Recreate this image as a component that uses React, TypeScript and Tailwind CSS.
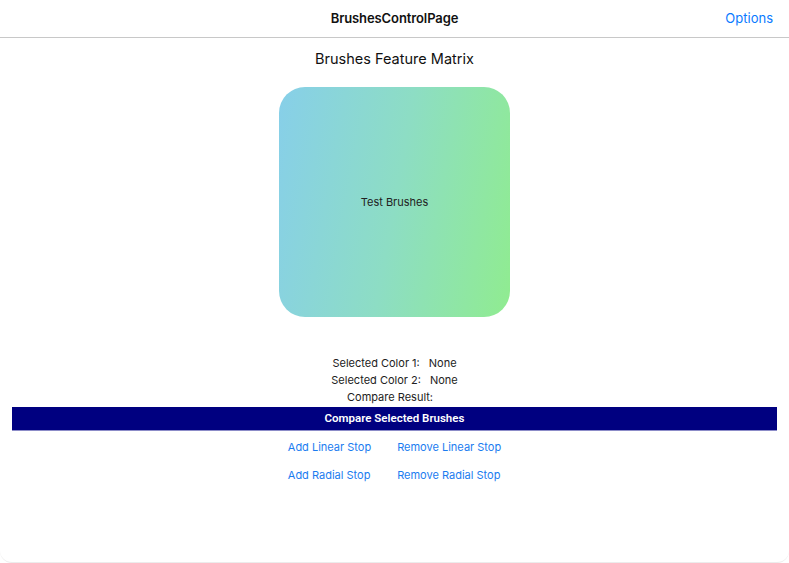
import React from "react";

export default function App() {
  const font = { fontFamily: "Inter, 'Noto Sans', sans-serif" };
  return (
    <div className="w-[789px] h-[563px] bg-white overflow-hidden flex flex-col rounded-b-[12px] border-b border-[#ececec]" style={font}>
      <div className="h-[38px] shrink-0 border-b border-[#c8c8c8] flex items-center relative">
        <div className="flex-1 text-center text-[13px] font-semibold text-[#111] tracking-[-0.1px]">BrushesControlPage</div>
        <div className="absolute right-[16px] top-[9px] text-[13px] text-[#0a7aff]">Options</div>
      </div>
      <div className="flex flex-col items-center">
        <div className="mt-[11px] text-[14.5px] text-[#111] leading-[20px]">Brushes Feature Matrix</div>
        <div className="mt-[18px] w-[231px] h-[230px] rounded-[26px] flex items-center justify-center" style={{ backgroundImage: "linear-gradient(100deg, #87cfe9 0%, #8dddc4 50%, #90ec90 100%)" }}>
          <span className="text-[11px] text-[#222]">Test Brushes</span>
        </div>
        <div className="mt-[38px] flex flex-col items-center text-[11px] text-[#222] leading-[17px]">
          <div className="flex gap-[9px]"><span>Selected Color 1:</span><span>None</span></div>
          <div className="flex gap-[9px]"><span>Selected Color 2:</span><span>None</span></div>
          <div className="flex gap-[9px]"><span>Compare Result:</span><span></span></div>
        </div>
      </div>
      <div className="mx-[12px] mt-[1px] h-[24px] bg-[#000080] border-b border-[#8c8cc8] flex items-center justify-center text-white text-[11.5px] font-semibold" style={{ fontFamily: "Roboto, 'Noto Sans', sans-serif" }}>
        Compare Selected Brushes
      </div>
      <div className="mt-[8px] flex justify-center">
        <div className="grid grid-cols-[auto_auto] gap-x-[26px] gap-y-[12px] text-[11px] text-[#1a7cf0] leading-[16px]">
          <span>Add Linear Stop</span>
          <span>Remove Linear Stop</span>
          <span>Add Radial Stop</span>
          <span>Remove Radial Stop</span>
        </div>
      </div>
    </div>
  );
}
